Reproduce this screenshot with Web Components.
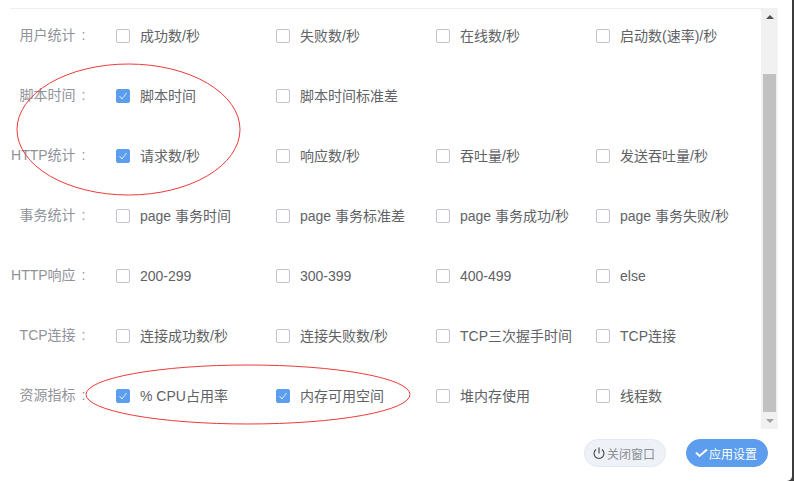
<!DOCTYPE html>
<html><head><meta charset="utf-8"><style>
html,body{margin:0;padding:0;background:#fff;height:481px;overflow:hidden}
body{font-family:"Liberation Sans","Noto Sans CJK SC",sans-serif}
</style></head><body>
<settings-dialog>
<metric-row label="用户统计"><metric-check>成功数/秒</metric-check><metric-check>失败数/秒</metric-check><metric-check>在线数/秒</metric-check><metric-check>启动数(速率)/秒</metric-check></metric-row>
<metric-row label="脚本时间"><metric-check checked>脚本时间</metric-check><metric-check>脚本时间标准差</metric-check></metric-row>
<metric-row label="HTTP统计"><metric-check checked>请求数/秒</metric-check><metric-check>响应数/秒</metric-check><metric-check>吞吐量/秒</metric-check><metric-check>发送吞吐量/秒</metric-check></metric-row>
<metric-row label="事务统计"><metric-check>page 事务时间</metric-check><metric-check>page 事务标准差</metric-check><metric-check>page 事务成功/秒</metric-check><metric-check>page 事务失败/秒</metric-check></metric-row>
<metric-row label="HTTP响应"><metric-check>200-299</metric-check><metric-check>300-399</metric-check><metric-check>400-499</metric-check><metric-check>else</metric-check></metric-row>
<metric-row label="TCP连接"><metric-check>连接成功数/秒</metric-check><metric-check>连接失败数/秒</metric-check><metric-check>TCP三次握手时间</metric-check><metric-check>TCP连接</metric-check></metric-row>
<metric-row label="资源指标"><metric-check checked>% CPU占用率</metric-check><metric-check checked>内存可用空间</metric-check><metric-check>堆内存使用</metric-check><metric-check>线程数</metric-check></metric-row>
<pill-button slot="actions" icon="power">关闭窗口</pill-button>
<pill-button slot="actions" icon="check" primary>应用设置</pill-button>
</settings-dialog>
<script>
class SettingsDialog extends HTMLElement{constructor(){super();this.attachShadow({mode:'open'}).innerHTML=`<style>
:host{display:block;position:relative;width:794px;height:481px;overflow:hidden;background:#3c3c3c;font-size:14px}
.window{width:792px;height:481px;box-sizing:border-box;padding:8px 0 0 10px;background:#fff;border-bottom-right-radius:5px}
.panel{width:768px;height:421px;display:flex}
.list{flex:1;min-width:0;overflow:hidden;display:flex;flex-direction:column;border-top:1px solid #ebeef5}
.bar{width:17px;background:#f1f1f1;display:flex;flex-direction:column;flex:none}
.arrow{height:17px;display:flex;align-items:center;justify-content:center;flex:none}
.thumb{flex:1;margin:49px 2px 0;background:#c1c1c1}
.up{width:0;height:0;border:4px solid transparent;border-top:0;border-bottom:4px solid #505050}
.down{width:0;height:0;border:4px solid transparent;border-bottom:0;border-top:4px solid #a3a3a3}
.actions{display:flex;justify-content:flex-end;gap:20px;width:758px;margin-top:10px}
svg.ann{position:absolute;left:0;top:0;pointer-events:none}
</style>
<div class="window">
<div class="panel"><div class="list"><slot></slot></div><div class="bar"><div class="arrow"><div class="up"></div></div><div class="thumb"></div><div class="arrow"><div class="down"></div></div></div></div>
<div class="actions"><slot name="actions"></slot></div>
</div>
<svg class="ann" width="794" height="481" fill="none" stroke="#ee3a3a" stroke-width="1"><ellipse cx="128.500" cy="129.500" rx="111.500" ry="65.500"/><ellipse cx="248" cy="394.500" rx="162" ry="29.500"/></svg>`}}
customElements.define('settings-dialog',SettingsDialog);
class MetricRow extends HTMLElement{constructor(){super();this.attachShadow({mode:'open'}).innerHTML=`<style>
:host{display:flex;align-items:center;height:60px;flex:none}
:host(:first-child){margin-top:-3px}
.label{width:79.500px;margin-right:26.500px;padding-bottom:2px;flex:none;display:flex;justify-content:flex-end;white-space:nowrap;color:#909399;line-height:20px}
.label i{font-style:normal;margin:0 4px 0 6px}
</style><div class="label"><span><span class="t"></span><i>:</i></span></div><slot></slot>`;this.shadowRoot.querySelector('.t').textContent=this.getAttribute('label')}}
customElements.define('metric-row',MetricRow);
class MetricCheck extends HTMLElement{constructor(){super();this.attachShadow({mode:'open'}).innerHTML=`<style>
:host{display:flex;align-items:center;width:160px;flex:none;white-space:nowrap;color:#606266;font-size:14px;line-height:20px}
.box{width:14px;height:14px;box-sizing:border-box;border:1px solid #c0c4cc;border-radius:2px;margin-right:10px;flex:none;background:#fff;display:flex}
:host([checked]) .box{background:#5c9ded;border-color:#5c9ded}
svg{display:none}:host([checked]) svg{display:block}
</style><span class="box"><svg width="12" height="12" viewBox="0 0 12 12" fill="none" stroke="#eaf2fd" stroke-width=".9"><path d="M2.500 6l2.500 3 4.500-6"/></svg></span><slot></slot>`}}
customElements.define('metric-check',MetricCheck);
const icons={power:'<svg width="12" height="14" viewBox="0 0 12 14" fill="none" stroke="#444" stroke-width="1.100"><path d="M3 3.500A5 5 0 1 0 9 3.500M6 1.500V7.500"/></svg>',check:'<svg width="13" height="10" viewBox="0 0 13 10" fill="none" stroke="#fff" stroke-width="2"><path d="M1 4.500l3.500 3.500L12 1.500"/></svg>'};
class PillButton extends HTMLElement{constructor(){super();this.attachShadow({mode:'open'}).innerHTML=`<style>
:host{display:flex;align-items:center;gap:2px;width:82px;height:28px;box-sizing:border-box;padding-left:8px;border-radius:14px;border:1px solid #e3e8f2;background:#eef1f8;color:#8a8d93;font-size:12px;white-space:nowrap}
:host([primary]){background:#5c9ded;border-color:#5c9ded;color:#fff;gap:1px}
svg{display:block}
</style>${icons[this.getAttribute('icon')]}<slot></slot>`}}
customElements.define('pill-button',PillButton);
</script>
</body></html>
